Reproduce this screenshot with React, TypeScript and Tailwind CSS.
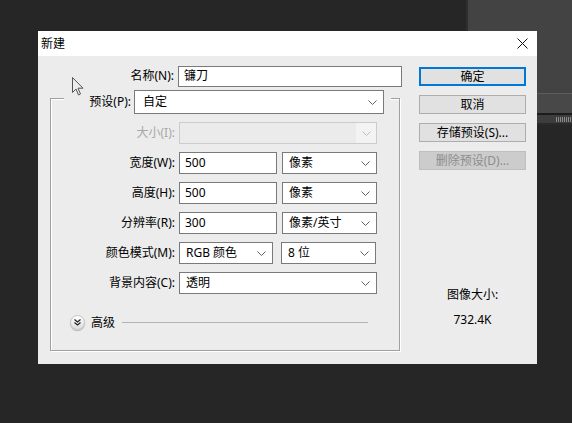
import React from 'react';

const font = { fontFamily: '"Noto Sans", "Noto Sans CJK SC", sans-serif' };

function Chevron({ color = '#606060' }: { color?: string }) {
  return (
    <svg width="9" height="5" viewBox="0 0 9 5" className="shrink-0">
      <polyline points="0.5,0.5 4.5,4.5 8.5,0.5" fill="none" stroke={color} strokeWidth="1" />
    </svg>
  );
}

function Select({ value, w, disabled }: { value?: string; w: string; disabled?: boolean }) {
  if (disabled) {
    return (
      <div className={`${w} h-[22px] flex border border-[#cccccc] bg-[#ebebeb]`}>
        <div className="flex-1" />
        <div className="w-[20px] flex items-center justify-center bg-[#f3f3f3]">
          <Chevron color="#bdbdbd" />
        </div>
      </div>
    );
  }
  return (
    <div className={`${w} h-[22px] flex items-center justify-between border border-[#7a7a7a] bg-white pl-[6px] pr-[6px]`}>
      <span className="text-[12px] leading-none text-black">{value}</span>
      <Chevron />
    </div>
  );
}

function Input({ value, w }: { value: string; w: string }) {
  return (
    <div className={`${w} h-[22px] flex items-center border border-[#7a7a7a] bg-white pl-[5px]`}>
      <span className="text-[12px] leading-none text-black">{value}</span>
    </div>
  );
}

function Row({ label, disabled, children }: { label: string; disabled?: boolean; children: React.ReactNode }) {
  return (
    <div className="flex items-center h-[22px]">
      <div className={`w-[125px] text-right text-[12px] leading-none pr-[1px] ${disabled ? 'text-[#a8a8a8]' : 'text-black'}`}>
        {label}
      </div>
      <div className="ml-[3px] flex gap-[5px]">{children}</div>
    </div>
  );
}

function Btn({ label, primary, disabled }: { label: string; primary?: boolean; disabled?: boolean }) {
  const cls = primary
    ? 'border-2 border-[#0078d7] bg-[#e1e1e1] text-black'
    : disabled
    ? 'border border-[#bfbfbf] bg-[#cccccc] text-[#8d8d8d]'
    : 'border border-[#adadad] bg-[#e1e1e1] text-black';
  return (
    <div className={`w-[107px] h-[19px] flex items-center justify-center text-[12px] leading-none ${cls}`}>
      {label}
    </div>
  );
}

export default function App() {
  return (
    <div className="relative w-[572px] h-[423px] bg-[#262626] overflow-hidden" style={font}>
      {/* desktop panel behind the dialog */}
      <div className="absolute left-[466px] top-0 w-[106px] flex flex-col border-l-2 border-[#2e2e2e]">
        <div className="h-[93px] bg-[#434343]" />
        <div className="h-[1px] bg-[#5c5c5c]" />
        <div className="h-[19px] bg-[#484848]" />
        <div className="h-[2px] bg-[#1c1c1c]" />
        <div className="h-[8px] bg-[#3d3d3d] flex justify-end items-center pr-[1px]">
          <div className="flex gap-[1px]">
            {[0, 1, 2, 3, 4, 5, 6, 7].map((i) => (
              <div key={i} className="w-[1px] h-[5px] bg-[#8a8a8a]" />
            ))}
          </div>
        </div>
        <div className="h-[2px] bg-[#2a2a2a]" />
      </div>

      {/* dialog window */}
      <div className="absolute left-[38px] top-[31px] w-[499px] h-[333px] bg-[#ececec] flex flex-col">
        <div className="h-[25px] bg-white flex items-center justify-between pl-[3px] pr-[9px]">
          <span className="text-[12px] leading-none text-black">新建</span>
          <svg width="11" height="11" viewBox="0 0 11 11">
            <path d="M0.5 0.5 L10.5 10.5 M10.5 0.5 L0.5 10.5" stroke="#111" strokeWidth="1" />
          </svg>
        </div>

        <div className="flex flex-1">
          {/* left column */}
          <div className="w-[381px] pt-[10px] flex flex-col">
            <div className="flex items-center h-[20px]">
              <div className="w-[137px] text-right text-[12px] leading-none text-black pr-[1px]">名称(N):</div>
              <div className="ml-[3px] w-[224px] h-[21px] flex items-center border border-[#7a7a7a] bg-white pl-[5px]">
                <span className="text-[12px] leading-none text-black">镰刀</span>
              </div>
            </div>

            <div className="relative mt-[12px] ml-[12px] w-[350px] h-[253px] border border-[#a0a0a0] shadow-[inset_1px_1px_0_#ffffff,1px_1px_0_#ffffff]">
              <div className="absolute left-[13px] top-[-9px] w-[327px] h-[24px] bg-[#ececec] flex items-center">
                <div className="w-[68px] text-right text-[12px] leading-none text-black pr-[1px]">预设(P):</div>
                <div className="ml-[2px] w-[250px] h-[24px] flex items-center justify-between border border-[#7a7a7a] bg-white pl-[8px] pr-[6px]">
                  <span className="text-[12px] leading-none text-black">自定</span>
                  <Chevron />
                </div>
              </div>

              <div className="pt-[23px] flex flex-col gap-[8px]">
                <Row label="大小(I):" disabled>
                  <Select w="w-[198px]" disabled />
                </Row>
                <Row label="宽度(W):">
                  <Input value="500" w="w-[98px]" />
                  <Select value="像素" w="w-[95px]" />
                </Row>
                <Row label="高度(H):">
                  <Input value="500" w="w-[98px]" />
                  <Select value="像素" w="w-[95px]" />
                </Row>
                <Row label="分辨率(R):">
                  <Input value="300" w="w-[98px]" />
                  <Select value="像素/英寸" w="w-[95px]" />
                </Row>
                <Row label="颜色模式(M):">
                  <Select value="RGB 颜色" w="w-[94px]" />
                  <div className="ml-[3px]">
                    <Select value="8 位" w="w-[95px]" />
                  </div>
                </Row>
                <Row label="背景内容(C):">
                  <Select value="透明" w="w-[198px]" />
                </Row>
              </div>

              <div className="mt-[21px] ml-[19px] flex items-center">
                <div className="w-[15px] h-[15px] rounded-full bg-gradient-to-b from-white to-[#dcdcdc] border border-[#c4c4c4] shadow-[0_1px_1px_#b0b0b0] flex items-center justify-center">
                  <svg width="7" height="7" viewBox="0 0 7 7">
                    <polyline points="0.5,0.5 3.5,3 6.5,0.5" fill="none" stroke="#222" strokeWidth="1.2" />
                    <polyline points="0.5,3.5 3.5,6 6.5,3.5" fill="none" stroke="#222" strokeWidth="1.2" />
                  </svg>
                </div>
                <span className="ml-[6px] text-[12px] leading-none text-black">高级</span>
                <div className="ml-[7px] w-[246px] h-[1px] bg-[#b4b4b4]" />
              </div>
            </div>
          </div>

          {/* right column */}
          <div className="pt-[11px] flex flex-col gap-[9px]">
            <Btn label="确定" primary />
            <Btn label="取消" />
            <Btn label="存储预设(S)..." />
            <Btn label="删除预设(D)..." disabled />
            <div className="mt-[110px] w-[107px] flex flex-col items-center gap-[13px] text-[12px] leading-none text-black">
              <span>图像大小:</span>
              <span>732.4K</span>
            </div>
          </div>
        </div>
      </div>

      {/* mouse cursor */}
      <svg className="absolute left-[72px] top-[77px]" width="12" height="19" viewBox="0 0 12 19">
        <path d="M0.5 0.5 L0.5 15.5 L4 12 L6.5 18 L8.5 17 L6 11.2 L11 11.2 Z" fill="#ececec" stroke="#555" strokeWidth="1" strokeLinejoin="round" />
      </svg>
    </div>
  );
}
